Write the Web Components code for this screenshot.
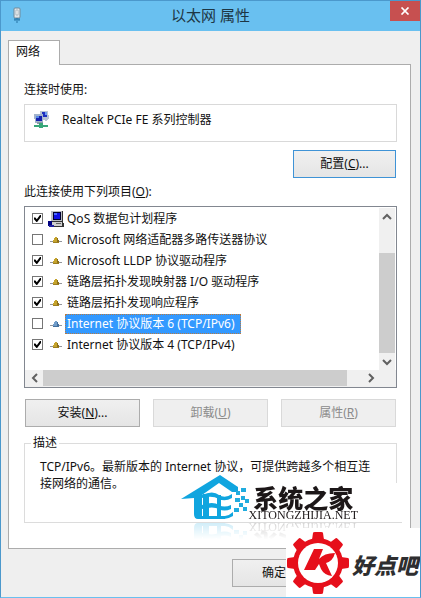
<!DOCTYPE html>
<html lang="zh-CN">
<head>
<meta charset="utf-8">
<title>以太网 属性</title>
<style>
  body {
    margin: 0;
    font: 12px/16px "Noto Sans", "Noto Sans CJK SC", sans-serif;
    color: #111;
    background: #efefef;
  }
</style>
</head>
<body>

<dialog-window>
  <span slot="title">以太网 属性</span>
  <tab-panel label="网络">
    <label for="adapter">连接时使用:</label>
    <adapter-box id="adapter">Realtek PCIe FE 系列控制器</adapter-box>
    <button-row class="end"><push-button key="C" more focused>配置</push-button></button-row>
    <label for="items">此连接使用下列项目(<u>O</u>):</label>
    <item-list id="items">
      <list-item icon="computer" checked>QoS 数据包计划程序</list-item>
      <list-item>Microsoft 网络适配器多路传送器协议</list-item>
      <list-item checked>Microsoft LLDP 协议驱动程序</list-item>
      <list-item checked>链路层拓扑发现映射器 I/O 驱动程序</list-item>
      <list-item checked>链路层拓扑发现响应程序</list-item>
      <list-item selected>Internet 协议版本 6 (TCP/IPv6)</list-item>
      <list-item checked>Internet 协议版本 4 (TCP/IPv4)</list-item>
    </item-list>
    <button-row>
      <push-button key="N" more>安装</push-button>
      <push-button key="U" disabled>卸载</push-button>
      <push-button key="R" disabled>属性</push-button>
    </button-row>
    <group-box label="描述">TCP/IPv6。最新版本的 Internet 协议，可提供跨越多个相互连接网络的通信。</group-box>
  </tab-panel>
  <push-button slot="footer">确定</push-button>
  <house-mark slot="overlay"></house-mark>
  <gear-mark slot="overlay"></gear-mark>
</dialog-window>

<script>
// small helper: attach an open shadow root and fill it from a template
function stamp(el, html) {
  const template = document.createElement("template");
  template.innerHTML = html;
  el.attachShadow({ mode: "open" }).appendChild(template.content.cloneNode(true));
}

/* ---------- window frame ---------- */
class DialogWindow extends HTMLElement {
  constructor() {
    super();
    stamp(this, `
<style>
  :host {
    display: flex;
    flex-direction: column;
    position: relative;
    box-sizing: border-box;
    min-height: 100vh;
    overflow: hidden;
    border: 1px solid #4b98cc;
    border-bottom-color: #69c0ef;
    background: #efefef;
  }
  header {
    display: grid;
    grid-template-columns: 30px 1fr 30px;
    height: 30px;
    background: #69c0f0;
  }
  .plug { width: 10px; height: 16px; margin: 6px 0 0 11px; }
  h1 { margin: 0; font-size: 15px; line-height: 28px; font-weight: 400; text-align: center; color: #1d3644; }
  .close {
    height: 20px;
    padding: 0;
    border: 0;
    background: #c75050;
  }
  .close svg { display: block; margin: 0 auto; }
  main { flex: 1; padding: 9px 9px 10px 7px; }
  footer { display: flex; padding: 0 9px 10px 231px; }
  footer ::slotted(*) { flex: 0 0 115px; }
</style>
<header>
  <svg class="plug" viewBox="0 0 10 16">
    <rect x="2" y="1" width="6" height="10" rx="1" fill="#dfe5ea" stroke="#738a99"/>
    <path d="M4 3h2v5H4z" fill="#fff" stroke="#8698a3" stroke-width=".6"/>
    <path d="M2 12h6M5 11v5M3 12v2M7 12v2" stroke="#2473a5" fill="none"/>
  </svg>
  <h1><slot name="title"></slot></h1>
  <button class="close" aria-label="关闭">
    <svg width="10" height="8" viewBox="0 0 10 8"><path d="M1.5.5l7 7M8.500.5l-7 7" stroke="#fff" stroke-width="1.7"/></svg>
  </button>
</header>
<main><slot></slot></main>
<footer><slot name="footer"></slot></footer>
<slot name="overlay"></slot>
`);
  }
}
customElements.define("dialog-window", DialogWindow);

/* ---------- tab with its page ---------- */
class TabPanel extends HTMLElement {
  constructor() {
    super();
    stamp(this, `
<style>
  :host { display: block; }
  .tab {
    position: relative;
    display: block;
    width: 52px;
    height: 25px;
    margin-bottom: -1px;
    padding: 0 10px 2px 7px;
    border: 1px solid #acacac;
    border-bottom: 0;
    background: #fff;
    color: inherit;
    font: inherit;
    text-align: left;
  }
  .page {
    display: flex;
    flex-direction: column;
    padding: 17px 13px 25px 15px;
    border: 1px solid #acacac;
    background: #fff;
  }
  ::slotted(label) { margin-bottom: 6px; }
  ::slotted(button-row) { margin: 11px 0 8px; }
  ::slotted(button-row.end) { margin: 8px 0 6px; }
</style>
<button class="tab" role="tab" aria-selected="true"></button>
<div class="page" role="tabpanel"><slot></slot></div>
`);
    this.shadowRoot.querySelector(".tab").textContent = this.getAttribute("label");
  }
}
customElements.define("tab-panel", TabPanel);

/* ---------- adapter name ---------- */
class AdapterBox extends HTMLElement {
  constructor() {
    super();
    stamp(this, `
<style>
  :host {
    display: flex;
    gap: 12px;
    height: 30px;
    padding: 6px 8px 0;
    border: 1px solid #d9d9d9;
    line-height: 18px;
  }
</style>
<svg width="17" height="17" viewBox="0 0 17 17" shape-rendering="crispEdges">
  <path d="M7 0h8l1 7-3 3-5-2z" fill="#b9c4d4"/>
  <path d="M9 1h5v5H9z" fill="#1c2fc0"/><path d="M12 1h2v3h-2z" fill="#6f9cf0"/>
  <path d="M1 3h9v8l-2 1H2z" fill="#a3b4cc"/>
  <path d="M3 5h6v5H3z" fill="#1420ae"/><path d="M3 5h3v2H3z" fill="#5888ea"/>
  <path d="M4 11h6v2H4z" fill="#8d9aa8"/>
  <path d="M1 14h14v2H1zM6 12h4v5H6z" fill="#38a779"/>
</svg>
<span><slot></slot></span>
`);
  }
}
customElements.define("adapter-box", AdapterBox);

/* ---------- buttons ---------- */
class ButtonRow extends HTMLElement {
  constructor() {
    super();
    stamp(this, `
<style>
  :host { display: grid; grid-template-columns: repeat(3, 1fr); gap: 13px; padding: 0 1px; }
  :host(.end) { display: flex; justify-content: flex-end; }
  :host(.end) ::slotted(*) { width: 103px; }
</style>
<slot></slot>
`);
  }
}
customElements.define("button-row", ButtonRow);

class PushButton extends HTMLElement {
  constructor() {
    super();
    stamp(this, `
<style>
  :host { display: block; }
  button {
    display: block;
    width: 100%;
    height: 28px;
    padding: 0;
    border: 1px solid #acacac;
    background: linear-gradient(#f0f0f0, #e5e5e5);
    color: inherit;
    font: inherit;
  }
  button:disabled { border-color: #d9d9d9; background: #efefef; color: #8b8b8b; }
  :host([focused]) button { border-color: #3f93d6; }
  :host([slot="footer"]) button { padding-right: 31px; }
</style>
<button><slot></slot></button>
`);
    const button = this.shadowRoot.querySelector("button");
    const key = this.getAttribute("key");
    button.disabled = this.hasAttribute("disabled");
    if (key) {
      const u = document.createElement("u");
      u.textContent = key;
      button.append("(", u, this.hasAttribute("more") ? ")..." : ")");
    }
  }
}
customElements.define("push-button", PushButton);

/* ---------- list of protocols ---------- */
class ItemList extends HTMLElement {
  constructor() {
    super();
    stamp(this, `
<style>
  :host {
    display: grid;
    grid-template: 163px 17px / 1fr 17px;
    border: 1px solid #828790;
    background: #fff;
  }
  .rows { grid-area: 1 / 1; padding-top: 1px; overflow: hidden; }
  .vbar { grid-area: 1 / 2; }
  .hbar { grid-column: 1 / 3; }
</style>
<div class="rows" role="group"><slot></slot></div>
<scroll-strip class="vbar" vertical></scroll-strip>
<scroll-strip class="hbar"></scroll-strip>
`);
  }
}
customElements.define("item-list", ItemList);

class ListItem extends HTMLElement {
  constructor() {
    super();
    const icons = {
      computer: `
  <path d="M4 0h11v11H4z" fill="#333"/><path d="M3 0h11v10H3z" fill="#b9bcc3"/>
  <path d="M5 1h8v8H5z" fill="#000030"/><path d="M6 2h6v6H6z" fill="#1010e8"/><path d="M6 2h3v2H6z" fill="#4a6cff"/>
  <path d="M3 11h12l1 2v3H3z" fill="#333"/><path d="M4 11h10v4H4z" fill="#cfcfcf"/><path d="M8 12h5v1H8z" fill="#666"/>
  <path d="M0 10h4v5H0z" fill="#000080"/><path d="M1 14h5v2H1z" fill="#2222a0"/>`,
      protocol: `
  <path d="M2 9h12v1H2z" fill="#93959a"/><path d="M5 8h6v3H5z" fill="var(--dark, #9b7d20)"/>
  <path d="M7 5h2v1h1v2h1v2H5V8h1V6h1z" fill="var(--light, #c5a32c)"/>
  <path d="M9 6h1v2h1v2H9z" fill="var(--dark, #8b6d18)"/>`
    };
    stamp(this, `
<style>
  :host { display: block; }
  label { display: flex; align-items: center; height: 21px; padding-left: 7px; white-space: nowrap; }
  input {
    appearance: none;
    flex: none;
    display: grid;
    width: 11px;
    height: 11px;
    margin: 0 5px 0 0;
    border: 1px solid #767676;
    background: #fff;
    box-sizing: border-box;
  }
  input:checked::before {
    content: "";
    margin: 1px;
    background: #000;
    clip-path: polygon(0 35%, 20% 35%, 40% 62%, 85% 0, 100% 0, 100% 28%, 45% 100%, 35% 100%, 0 60%);
  }
  span { margin-left: 1px; padding: 1px; line-height: 18px; }
  :host([selected]) { --dark: #426f9d; --light: #719dca; }
  :host([selected]) span {
    margin-left: 0;
    padding: 0 5px 0 1px;
    border: 1px dotted #b87b42;
    background: #3399ff;
    color: #fff;
  }
</style>
<label>
  <input type="checkbox">
  <svg width="17" height="16" viewBox="0 0 17 16" shape-rendering="crispEdges">${icons[this.getAttribute("icon") || "protocol"]}</svg>
  <span><slot></slot></span>
</label>
`);
    this.shadowRoot.querySelector("input").checked = this.hasAttribute("checked");
  }
}
customElements.define("list-item", ListItem);

class ScrollStrip extends HTMLElement {
  constructor() {
    super();
    const vertical = this.hasAttribute("vertical");
    const back = vertical ? "M1 7l4-4 4 4" : "M7 1L3 5l4 4";
    const next = vertical ? "M1 3l4 4 4-4" : "M3 1l4 4-4 4";
    const arrow = d => `<svg width="10" height="10"><path d="${d}" fill="none" stroke="#606060" stroke-width="2"/></svg>`;
    stamp(this, `
<style>
  :host { display: flex; padding: 0 17px 1px 1px; background: #f0f0f0; }
  :host([vertical]) { flex-direction: column; margin-top: 1px; margin-right: 1px; padding: 0; }
  button { display: grid; place-items: center; flex: 0 0 17px; padding: 0; border: 0; background: none; }
  i { background: #cdcdcd; }
  .before, .after { background: #f0f0f0; }
  i { flex: 1; }
  .after { flex: 0 0 15px; }
  :host([vertical]) .before { flex: 0 0 28px; }
  :host([vertical]) .after { display: none; }
</style>
<button aria-label="后退">${arrow(back)}</button>
<div class="before"></div><i></i><div class="after"></div>
<button aria-label="前进">${arrow(next)}</button>
`);
  }
}
customElements.define("scroll-strip", ScrollStrip);

/* ---------- description ---------- */
class GroupBox extends HTMLElement {
  constructor() {
    super();
    stamp(this, `
<style>
  :host { display: block; }
  fieldset { height: 88px; box-sizing: border-box; margin: 0; padding: 7px 20px 0 15px; border: 1px solid #dcdcdc; line-height: 17px; }
  legend { margin-left: -9px; padding: 0 2px; line-height: 16px; }
</style>
<fieldset><legend></legend><slot></slot></fieldset>
`);
    this.shadowRoot.querySelector("legend").textContent = this.getAttribute("label");
  }
}
customElements.define("group-box", GroupBox);

/* ---------- site marks lying over the window ---------- */
class HouseMark extends HTMLElement {
  constructor() {
    super();
    stamp(this, `
<style>
  :host {
    position: absolute;
    right: 62px;
    bottom: 76px;
    display: flex;
    height: 46px;
    -webkit-box-reflect: below 0 linear-gradient(transparent 60%, rgba(0, 0, 0, .22));
  }
  /* white backing that hides the group frame beside the mark */
  :host::before {
    content: "";
    position: absolute;
    inset: 8px -44px -2px 0;
    z-index: -1;
    background: #fff;
    border-bottom: 1px solid #dcdcdc;
  }
  .words { padding-top: 11px; text-align: center; color: #1c1718; }
  b { display: block; font: 900 25px/23px "Noto Sans CJK SC", sans-serif; }
  small { display: block; font: 12px/12px "Liberation Serif", serif; }
</style>
<svg width="68" height="46" viewBox="0 0 68 46">
  <path d="M0 24L39 0l18 12v5h-6L38 8 21 20v21h23v3H17q-4 0-4-5V23z" fill="#10a5df"/>
  <path d="M22 19h6v22h-6zM21 41h23q5-1 8-4v4q-5 3-9 3H21z" fill="#10a5df"/>
  <path d="M21 20q11-5 17 0 6 4 13-1v4q-7 4-13 1-7-4-17-1zM21 30q11-4 17 0 5 3 12 0v4q-7 3-12 0-6-3-17 0zM36 20h4v22h-4z" fill="#10a5df"/>
  <path d="M55 16h4v4h-4zM60 13h5v4h-5zM54 23h5v4h-5zM60 21h4v4h-4zM64 24h4v4h-4zM58 28h4v4h-4zM62 32h4v4h-4zM53 33h5v4h-5z" fill="#20acdf"/>
</svg>
<div class="words"><b>系统之家</b><small>XITONGZHIJIA.NET</small></div>
`);
  }
}
customElements.define("house-mark", HouseMark);

class GearMark extends HTMLElement {
  constructor() {
    super();
    const teeth = [0, 45, 90, 135, 180, 225, 270, 315]
      .map(a => `<path d="M-6-23l1-7q0-1 2-1h6q2 0 2 1l1 7z" transform="rotate(${a})"/>`).join("");
    stamp(this, `
<style>
  :host {
    position: absolute;
    right: -1px;
    bottom: -1px;
    display: flex;
    align-items: center;
    box-sizing: border-box;
    width: 135px;
    height: 70px;
    padding-left: 1px;
    background: #fff;
  }
  b { margin: 1px 0 0 3px; font: italic 900 22px/30px "Noto Sans CJK SC", sans-serif; color: #2e2e30; }
</style>
<svg width="62" height="64" viewBox="-31 -32 62 64">
  <g fill="#e60f1b">${teeth}<circle r="25"/></g>
  <circle r="20" fill="#fff"/>
  <path d="M-4-14H5L1-4Q6-10 17-10 15-2 8 0L14 13Q6 12 3 6L1 1-3 7H-14z" fill="#e60f1b"/>
</svg>
<b>好点吧</b>
`);
  }
}
customElements.define("gear-mark", GearMark);
</script>
</body>
</html>
